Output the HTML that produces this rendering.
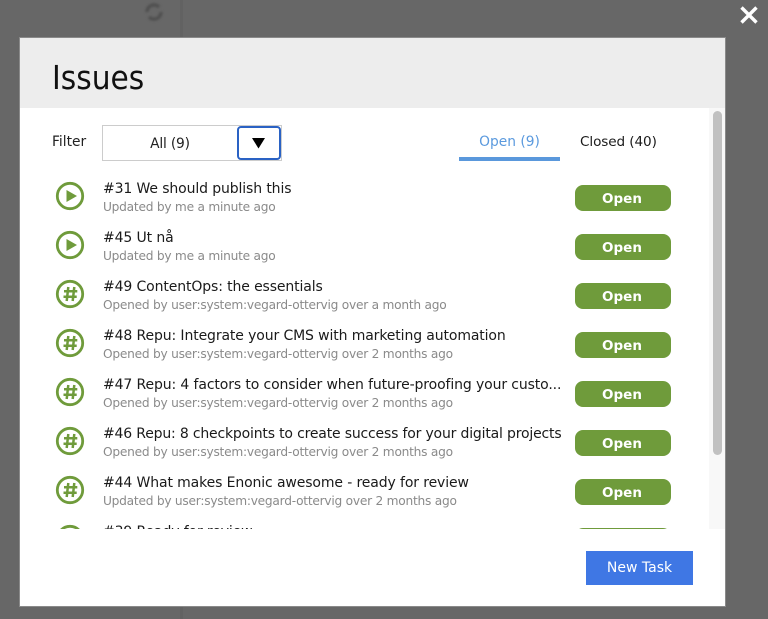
<!DOCTYPE html>
<html><head><meta charset="utf-8">
<style>
html,body{margin:0;padding:0;width:768px;height:619px;overflow:hidden;background:#676767;font-family:"DejaVu Sans",sans-serif}
.a{position:absolute;white-space:nowrap}
#dlg{position:absolute;left:20px;top:38px;width:705px;height:568px;background:#fff;box-shadow:0 0 0 1px #8a8a8a}
#list{position:absolute;left:20px;top:108px;width:689px;height:421px;overflow:hidden}
.t{position:absolute;left:83px;font-size:14px;line-height:18px;color:#1a1a1a;letter-spacing:-.12px;white-space:nowrap;filter:blur(.2px)}
.s{position:absolute;left:83px;font-size:12.2px;line-height:16px;color:#8a8a8a;letter-spacing:-.24px;white-space:nowrap;filter:blur(.2px)}
.b{position:absolute;left:555px;width:96px;height:26px;border-radius:8px;background:#6f9b3b;color:#fff;font-weight:bold;font-size:13.5px;line-height:28px;text-align:center;text-indent:-2px}
.i{position:absolute;left:35px;width:30px;height:30px}
</style></head><body>
<div class="a" style="left:180px;top:0;width:3px;height:38px;background:#626262"></div>
<div class="a" style="left:180px;top:606px;width:3px;height:13px;background:#626262"></div>
<svg class="a" style="left:143px;top:1px;filter:blur(1px)" width="22" height="22" viewBox="0 0 22 22"><path d="M4 11a7 7 0 0 1 12-5M18 11a7 7 0 0 1-12 5" fill="none" stroke="#505050" stroke-width="3.500"/></svg>
<svg class="a" style="left:739px;top:5px" width="20" height="20" viewBox="0 0 20 20"><path d="M2.500 2.500L17.500 17.500M17.500 2.500L2.500 17.500" stroke="#fff" stroke-width="3.400"/></svg>
<div id="dlg">
<div class="a" style="left:0;top:0;width:705px;height:70px;background:#ededed"></div>
<div class="a" style="left:32px;top:20px;font-size:33px;line-height:40px;color:#111;transform:scaleX(.9);transform-origin:0 0">Issues</div>
<div class="a" style="left:32px;top:95px;font-size:13.800px;line-height:18px;color:#222">Filter</div>
<div class="a" style="left:82px;top:87px;width:178px;height:34px;border:1px solid #ccc;background:#fff"></div>
<div class="a" style="left:82px;top:97px;width:136px;text-align:center;font-size:13.800px;line-height:18px;letter-spacing:-.2px;color:#222">All (9)</div>
<div class="a" style="left:217px;top:88px;width:40px;height:30px;border:2px solid #2a62c4;border-radius:4px;background:#fff"></div>
<svg class="a" style="left:232px;top:100px" width="14" height="11"><path d="M0 0H13L6.500 10.500Z" fill="#000"/></svg>
<div class="a" style="left:439px;top:95px;width:101px;text-align:center;font-size:13.800px;line-height:18px;color:#5b9ade">Open (9)</div>
<div class="a" style="left:439px;top:119px;width:101px;height:4px;background:#5a98dc"></div>
<div class="a" style="left:560px;top:95px;font-size:13.600px;line-height:18px;letter-spacing:-.1px;color:#1a1a1a">Closed (40)</div>
<div class="a" style="left:689px;top:70px;width:16px;height:421px;background:#f8f8f8"></div>
<div class="a" style="left:693px;top:73px;width:9px;height:344px;border-radius:5px;background:#c1c1c1"></div>
<div class="a" style="left:566px;top:513px;width:107px;height:34px;background:#3f77e4;color:#fff;font-size:14px;line-height:34px;text-align:center">New Task</div>
</div>
<div id="list">
<svg class="i" style="top:73px" viewBox="0 0 30 30"><circle cx="15" cy="15" r="12.700" fill="none" stroke="#6f9b3b" stroke-width="2.800"/><path d="M11.500 9L22 15L11.500 21Z" fill="#6f9b3b"/></svg>
<div class="t" style="top:72px">#31 We should publish this</div>
<div class="s" style="top:91px">Updated by me a minute ago</div>
<div class="b" style="top:77px">Open</div>

<svg class="i" style="top:122px" viewBox="0 0 30 30"><circle cx="15" cy="15" r="12.700" fill="none" stroke="#6f9b3b" stroke-width="2.800"/><path d="M11.500 9L22 15L11.500 21Z" fill="#6f9b3b"/></svg>
<div class="t" style="top:121px">#45 Ut nå</div>
<div class="s" style="top:140px">Updated by me a minute ago</div>
<div class="b" style="top:126px">Open</div>

<svg class="i" style="top:171px" viewBox="0 0 30 30"><circle cx="15" cy="15" r="12.700" fill="none" stroke="#6f9b3b" stroke-width="2.800"/><path d="M13.300 8L11.700 22M19.300 8L17.700 22M9 12.300H22.300M8.500 17.700H21.700" fill="none" stroke="#6f9b3b" stroke-width="2.500"/></svg>
<div class="t" style="top:170px">#49 ContentOps: the essentials</div>
<div class="s" style="top:189px">Opened by user:system:vegard-ottervig over a month ago</div>
<div class="b" style="top:175px">Open</div>

<svg class="i" style="top:220px" viewBox="0 0 30 30"><circle cx="15" cy="15" r="12.700" fill="none" stroke="#6f9b3b" stroke-width="2.800"/><path d="M13.300 8L11.700 22M19.300 8L17.700 22M9 12.300H22.300M8.500 17.700H21.700" fill="none" stroke="#6f9b3b" stroke-width="2.500"/></svg>
<div class="t" style="top:219px">#48 Repu: Integrate your CMS with marketing automation</div>
<div class="s" style="top:238px">Opened by user:system:vegard-ottervig over 2 months ago</div>
<div class="b" style="top:224px">Open</div>

<svg class="i" style="top:269px" viewBox="0 0 30 30"><circle cx="15" cy="15" r="12.700" fill="none" stroke="#6f9b3b" stroke-width="2.800"/><path d="M13.300 8L11.700 22M19.300 8L17.700 22M9 12.300H22.300M8.500 17.700H21.700" fill="none" stroke="#6f9b3b" stroke-width="2.500"/></svg>
<div class="t" style="top:268px">#47 Repu: 4 factors to consider when future-proofing your custo...</div>
<div class="s" style="top:287px">Opened by user:system:vegard-ottervig over 2 months ago</div>
<div class="b" style="top:273px">Open</div>

<svg class="i" style="top:318px" viewBox="0 0 30 30"><circle cx="15" cy="15" r="12.700" fill="none" stroke="#6f9b3b" stroke-width="2.800"/><path d="M13.300 8L11.700 22M19.300 8L17.700 22M9 12.300H22.300M8.500 17.700H21.700" fill="none" stroke="#6f9b3b" stroke-width="2.500"/></svg>
<div class="t" style="top:317px;letter-spacing:-.18px">#46 Repu: 8 checkpoints to create success for your digital projects</div>
<div class="s" style="top:336px">Opened by user:system:vegard-ottervig over 2 months ago</div>
<div class="b" style="top:322px">Open</div>

<svg class="i" style="top:367px" viewBox="0 0 30 30"><circle cx="15" cy="15" r="12.700" fill="none" stroke="#6f9b3b" stroke-width="2.800"/><path d="M13.300 8L11.700 22M19.300 8L17.700 22M9 12.300H22.300M8.500 17.700H21.700" fill="none" stroke="#6f9b3b" stroke-width="2.500"/></svg>
<div class="t" style="top:366px">#44 What makes Enonic awesome - ready for review</div>
<div class="s" style="top:385px">Updated by user:system:vegard-ottervig over 2 months ago</div>
<div class="b" style="top:371px">Open</div>

<svg class="i" style="top:416px" viewBox="0 0 30 30"><circle cx="15" cy="15" r="12.700" fill="none" stroke="#6f9b3b" stroke-width="2.800"/></svg>
<div class="t" style="top:415px">#39 Ready for review</div>
<div class="b" style="top:420px">Open</div>
</div>
</body></html>
